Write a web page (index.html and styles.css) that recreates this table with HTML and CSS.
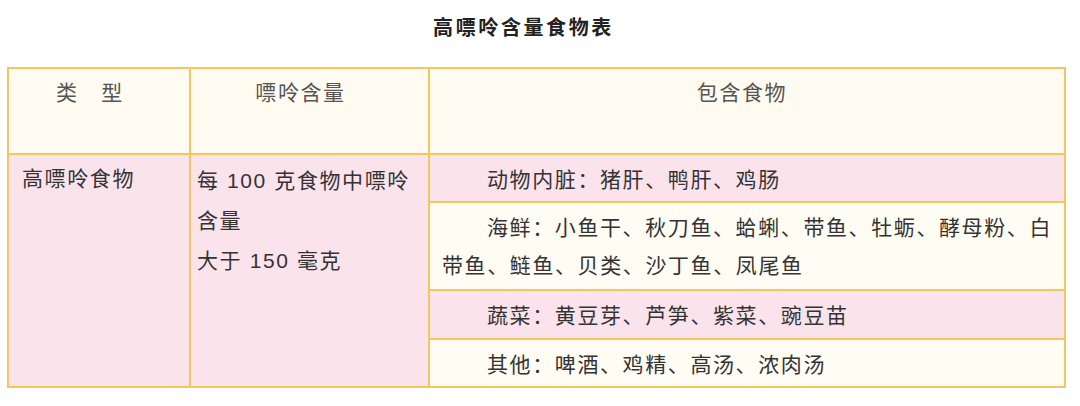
FILE: index.html
```html
<!DOCTYPE html>
<html lang="zh">
<head>
<meta charset="utf-8">
<link rel="stylesheet" href="styles.css">
</head>
<body>
<h1 class="title">高嘌呤含量食物表</h1>
<table class="tbl">
  <colgroup>
    <col class="w1">
    <col class="w2">
    <col>
  </colgroup>
  <tr class="head">
    <th>类　型</th>
    <th>嘌呤含量</th>
    <th class="h3">包含食物</th>
  </tr>
  <tr class="pink r1">
    <td class="kind" rowspan="4">高嘌呤食物</td>
    <td class="amount" rowspan="4"><p>每 100 克食物中嘌呤含量</p><p>大于 150 毫克</p></td>
    <td class="food">动物内脏：猪肝、鸭肝、鸡肠</td>
  </tr>
  <tr class="cream r2">
    <td class="food">海鲜：小鱼干、秋刀鱼、蛤蜊、带鱼、牡蛎、酵母粉、白带鱼、鲢鱼、贝类、沙丁鱼、凤尾鱼</td>
  </tr>
  <tr class="pink r3">
    <td class="food">蔬菜：黄豆芽、芦笋、紫菜、豌豆苗</td>
  </tr>
  <tr class="cream r4">
    <td class="food">其他：啤酒、鸡精、高汤、浓肉汤</td>
  </tr>
</table>
</body>
</html>
```
FILE: styles.css
```css
html, body {
  margin: 0;
  padding: 0;
  background: #ffffff;
}
body {
  padding: 8px 14px 0 7px;
  font-family: "Liberation Sans", "Noto Sans CJK SC", sans-serif;
  color: #333333;
}
.title {
  margin: 0 0 21px 0;
  padding-right: 26px;
  font-family: "Noto Sans CJK SC", sans-serif;
  font-size: 20px;
  line-height: 38px;
  font-weight: 700;
  letter-spacing: 2.6px;
  text-align: center;
  color: #222222;
}
.tbl {
  width: 100%;
  table-layout: fixed;
  border-collapse: collapse;
  font-size: 21px;
  letter-spacing: 1.6px;
}
.w1 { width: 182px; }
.w2 { width: 239px; }
.tbl th, .tbl td {
  border: 2px solid #f3c760;
  vertical-align: top;
  text-align: left;
  line-height: 38px;
  padding: 5px 14px 0 13px;
}
.head { height: 86px; }
.head th {
  background: #fffbf1;
  padding: 5px 18px 0 0;
  font-weight: 400;
  color: #555555;
  text-align: center;
}
.head .h3 { padding-right: 10px; }
.r1 { height: 48px; }
.r2 { height: 88px; }
.r3 { height: 49px; }
.r4 { height: 48px; }
.pink td { background: #fbe3ec; }
.cream td { background: #fffcf3; }
.tbl td.kind, .tbl td.amount { background: #fbe3ec; }
.tbl td.amount {
  padding: 6px 12px 0 6px;
  line-height: 40px;
}
.amount p { margin: 0; }
.tbl td.food {
  padding: 6px 2px 0 12px;
  text-indent: 45px;
}
```
